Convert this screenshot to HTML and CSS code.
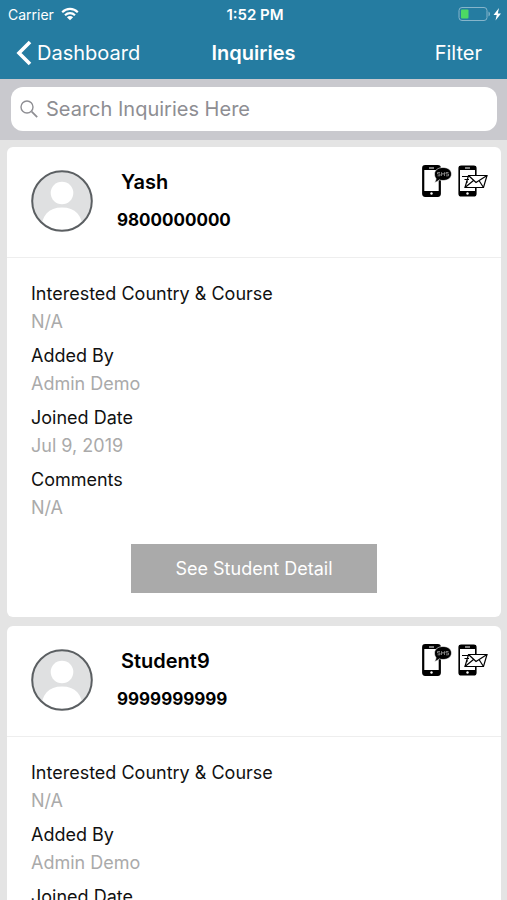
FILE: index.html
```html
<!DOCTYPE html>
<html lang="en">
<head>
<meta charset="UTF-8" />
<meta name="viewport" content="width=device-width, initial-scale=1" />
<title>Inquiries</title>
<link rel="stylesheet" href="styles.css">
</head>
<body>

<!-- Shared icons -->
<svg class="hidden" aria-hidden="true">
  <symbol id="avatar" viewBox="0 0 62 62">
    <clipPath id="avatarClip"><circle cx="31" cy="31" r="29" /></clipPath>
    <circle cx="31" cy="31" r="30" fill="#dfe0e1" />
    <g clip-path="url(#avatarClip)" fill="#fff">
      <circle cx="31" cy="23" r="11.3" />
      <path d="M10 62C10 46 17 37.5 31 37.5S52 46 52 62z" />
    </g>
    <circle cx="31" cy="31" r="29.8" fill="none" stroke="#5b5f62" stroke-width="2" />
  </symbol>
  <symbol id="sms" viewBox="0 0 30 32">
    <rect x="1.2" y="1.2" width="16.6" height="29.6" rx="2" fill="#fff" stroke="#000" stroke-width="2.2" />
    <path d="M1 1h17v4H1zM1 26h17v5H1z" />
    <path d="M7 3h5" stroke="#fff" stroke-width="1" />
    <circle cx="9.5" cy="28.5" r="1.2" fill="#fff" />
    <path d="M21 2.500c5 0 8.500 2.800 8.500 6.500s-3.500 6.500-8.500 6.500c-1.500 0-2.800-.2-4-.7-1 1.400-2.500 2.300-4.500 2.700 1-1.200 1.500-2.600 1.500-4-1-1.200-1.500-2.800-1.500-4.500 0-3.700 3.700-6.500 8.500-6.500z" stroke="#fff" stroke-width=".6" />
    <path d="M18 7.500h-2.500v1.500H18v1.800h-2.500M19.500 11V7.500l1.500 2 1.500-2V11M26.500 7.500H24v1.500h2.500v1.800H24" fill="none" stroke="#999" stroke-width=".8" />
  </symbol>
  <symbol id="mail" viewBox="0 0 30 32">
    <rect x="1.2" y="1.2" width="16.6" height="29.6" rx="2" fill="#fff" stroke="#000" stroke-width="1.6" />
    <path d="M1 1h17v4H1zM1 26h17v5H1z" />
    <path d="M7 3h5" stroke="#fff" stroke-width="1" />
    <circle cx="9.5" cy="28.5" r="1.2" fill="#fff" />
    <path d="M10.5 10.500H29L25.500 22.500H7z" fill="#fff" stroke="#000" stroke-width="1.200" />
    <path d="M10.500 10.500l7.500 7 11-7M7 22.500l8.500-7M25.500 22.500l-4.500-7M4 11.500h6M6.500 14.500H11M8 17h2" fill="none" stroke="#000" stroke-width="1.200" />
  </symbol>
</svg>

<div class="app">
  <header class="header">
    <div class="status-bar">
      <div class="carrier">
        <span>Carrier</span>
        <svg class="wifi" viewBox="0 0 18 14" aria-hidden="true">
          <path d="M1.200 5.200c4.500-4.300 11.100-4.300 15.600 0M4 8.200c2.900-2.800 7.100-2.800 10 0" fill="none" stroke="#fff" stroke-width="2.200" />
          <path d="M9 13.200L5.900 10.200c1.800-1.600 4.400-1.600 6.200 0z" fill="#fff" />
        </svg>
      </div>
      <span class="time">1:52 PM</span>
      <svg class="battery" viewBox="0 0 44 16" aria-hidden="true">
        <rect x="1" y="1.500" width="28" height="13" rx="3" fill="none" stroke="#86b5cb" />
        <rect x="3" y="3.500" width="7.500" height="9" rx="1" fill="#4cd964" />
        <path d="M30.500 5.500c2 1 2 4 0 5z" fill="#86b5cb" />
        <path d="M41 2l-5.500 7h3.200l-1.200 5.500 5.500-7h-3.200z" fill="#fff" />
      </svg>
    </div>
    <nav class="nav">
      <a href="#" class="back">
        <svg viewBox="0 0 16 26" aria-hidden="true"><path d="M14 2L3 13l11 11" fill="none" stroke="#fff" stroke-width="3.600" /></svg>
        Dashboard
      </a>
      <h1>Inquiries</h1>
      <button type="button" class="filter">Filter</button>
    </nav>
  </header>

  <form class="search">
    <label class="search-box">
      <svg viewBox="0 0 18 18" aria-hidden="true"><path d="M11.700 11.700l5.500 5.500" stroke="#8e8e93" stroke-width="1.800" /><circle cx="7" cy="7" r="6" fill="none" stroke="#8e8e93" stroke-width="1.400" /></svg>
      <input type="text" placeholder="Search Inquiries Here" aria-label="Search Inquiries Here" />
    </label>
  </form>

  <main class="list">
    <article class="card">
      <div class="card-head">
        <svg class="avatar" aria-hidden="true"><use href="#avatar" /></svg>
        <div class="person">
          <h2>Yash</h2>
          <p>9800000000</p>
        </div>
        <div class="actions">
          <button type="button" aria-label="Send SMS"><svg><use href="#sms" /></svg></button>
          <button type="button" aria-label="Send mail"><svg><use href="#mail" /></svg></button>
        </div>
      </div>
      <div class="card-body">
        <dl>
          <dt>Interested Country &amp; Course</dt>
          <dd>N/A</dd>
          <dt>Added By</dt>
          <dd>Admin Demo</dd>
          <dt>Joined Date</dt>
          <dd>Jul 9, 2019</dd>
          <dt>Comments</dt>
          <dd>N/A</dd>
        </dl>
        <button type="button" class="detail-btn">See Student Detail</button>
      </div>
    </article>

    <article class="card">
      <div class="card-head">
        <svg class="avatar" aria-hidden="true"><use href="#avatar" /></svg>
        <div class="person">
          <h2>Student9</h2>
          <p>9999999999</p>
        </div>
        <div class="actions">
          <button type="button" aria-label="Send SMS"><svg><use href="#sms" /></svg></button>
          <button type="button" aria-label="Send mail"><svg><use href="#mail" /></svg></button>
        </div>
      </div>
      <div class="card-body">
        <dl>
          <dt>Interested Country &amp; Course</dt>
          <dd>N/A</dd>
          <dt>Added By</dt>
          <dd>Admin Demo</dd>
          <dt>Joined Date</dt>
        </dl>
      </div>
    </article>
  </main>
</div>
</body>
</html>
```

FILE: styles.css
```css
/* Reset & base */
* {
  box-sizing: border-box;
}

body {
  margin: 0;
  background: #e4e4e4;
  font-family: Inter, "Liberation Sans", sans-serif;
  font-size: 18px;
  color: #111;
}

h1, h2, p, dl, dd {
  margin: 0;
}

button, input {
  font: inherit;
  border: none;
  padding: 0;
  background: none;
}

button {
  cursor: pointer;
}

svg {
  display: block;
}

.hidden {
  position: absolute;
  width: 0;
  height: 0;
}

.app {
  display: flex;
  flex-direction: column;
  height: 100vh;
}

/* Header */
.header {
  background: #257ca1;
  color: #fff;
}

.status-bar, .nav {
  display: grid;
  grid-template-columns: 1fr auto 1fr;
  align-items: center;
}

.status-bar {
  height: 28px;
  padding: 0 5px 0 8px;
  font-size: 14px;
}

.carrier {
  display: flex;
  align-items: center;
  gap: 7px;
}

.wifi {
  width: 18px;
  height: 14px;
}

.time {
  font-size: 15px;
  font-weight: 600;
}

.battery {
  width: 44px;
  height: 16px;
  justify-self: end;
}

.nav {
  height: 51px;
  padding: 0 16px 2px;
  font-size: 20px;
}

.back {
  display: flex;
  align-items: center;
  gap: 5px;
  color: #fff;
  text-decoration: none;
}

.back svg {
  width: 16px;
  height: 26px;
}

.nav h1 {
  font-size: 20px;
  font-weight: 600;
}

.filter {
  justify-self: end;
  padding: 0 9px;
  color: #fff;
}

/* Search */
.search {
  padding: 8px 10px 9px 11px;
  background: #c9c9ce;
}

.search-box {
  display: flex;
  align-items: center;
  gap: 8px;
  height: 44px;
  padding: 0 9px;
  background: #fff;
  border-radius: 12px;
}

.search-box svg {
  width: 18px;
  height: 18px;
}

.search-box input {
  flex: 1;
  min-width: 0;
  font-size: 20px;
  outline: none;
}

.search-box input::placeholder {
  color: #8e8e93;
  opacity: 1;
}

/* Inquiry cards */
.list {
  flex: 1;
  min-height: 0;
  padding: 7px 6px 0 7px;
  overflow-y: auto;
  scrollbar-width: none;
}

.card {
  margin-bottom: 9px;
  background: #fff;
  border-radius: 6px;
}

.card-head {
  display: flex;
  align-items: flex-start;
  padding: 18px 13px 0 24px;
  height: 111px;
  border-bottom: 1px solid #eee;
}

.avatar {
  width: 62px;
  height: 62px;
  margin-top: 5px;
}

.person {
  flex: 1;
  padding-left: 24px;
  color: #000;
}

.person h2 {
  padding-left: 4px;
  font-size: 20px;
  font-weight: 600;
  line-height: 34px;
}

.person p {
  font-size: 17px;
  font-weight: 700;
  line-height: 42px;
}

.actions {
  display: flex;
  gap: 6px;
}

.actions svg {
  width: 30px;
  height: 32px;
}

.card-body {
  padding: 22px 24px 24px;
}

dt, dd {
  line-height: 28px;
}

dd {
  margin-bottom: 6px;
  color: #aaa;
}

.detail-btn {
  display: block;
  width: 55%;
  height: 49px;
  margin: 22px auto 0;
  background: #aaa;
  color: #fff;
}
```
